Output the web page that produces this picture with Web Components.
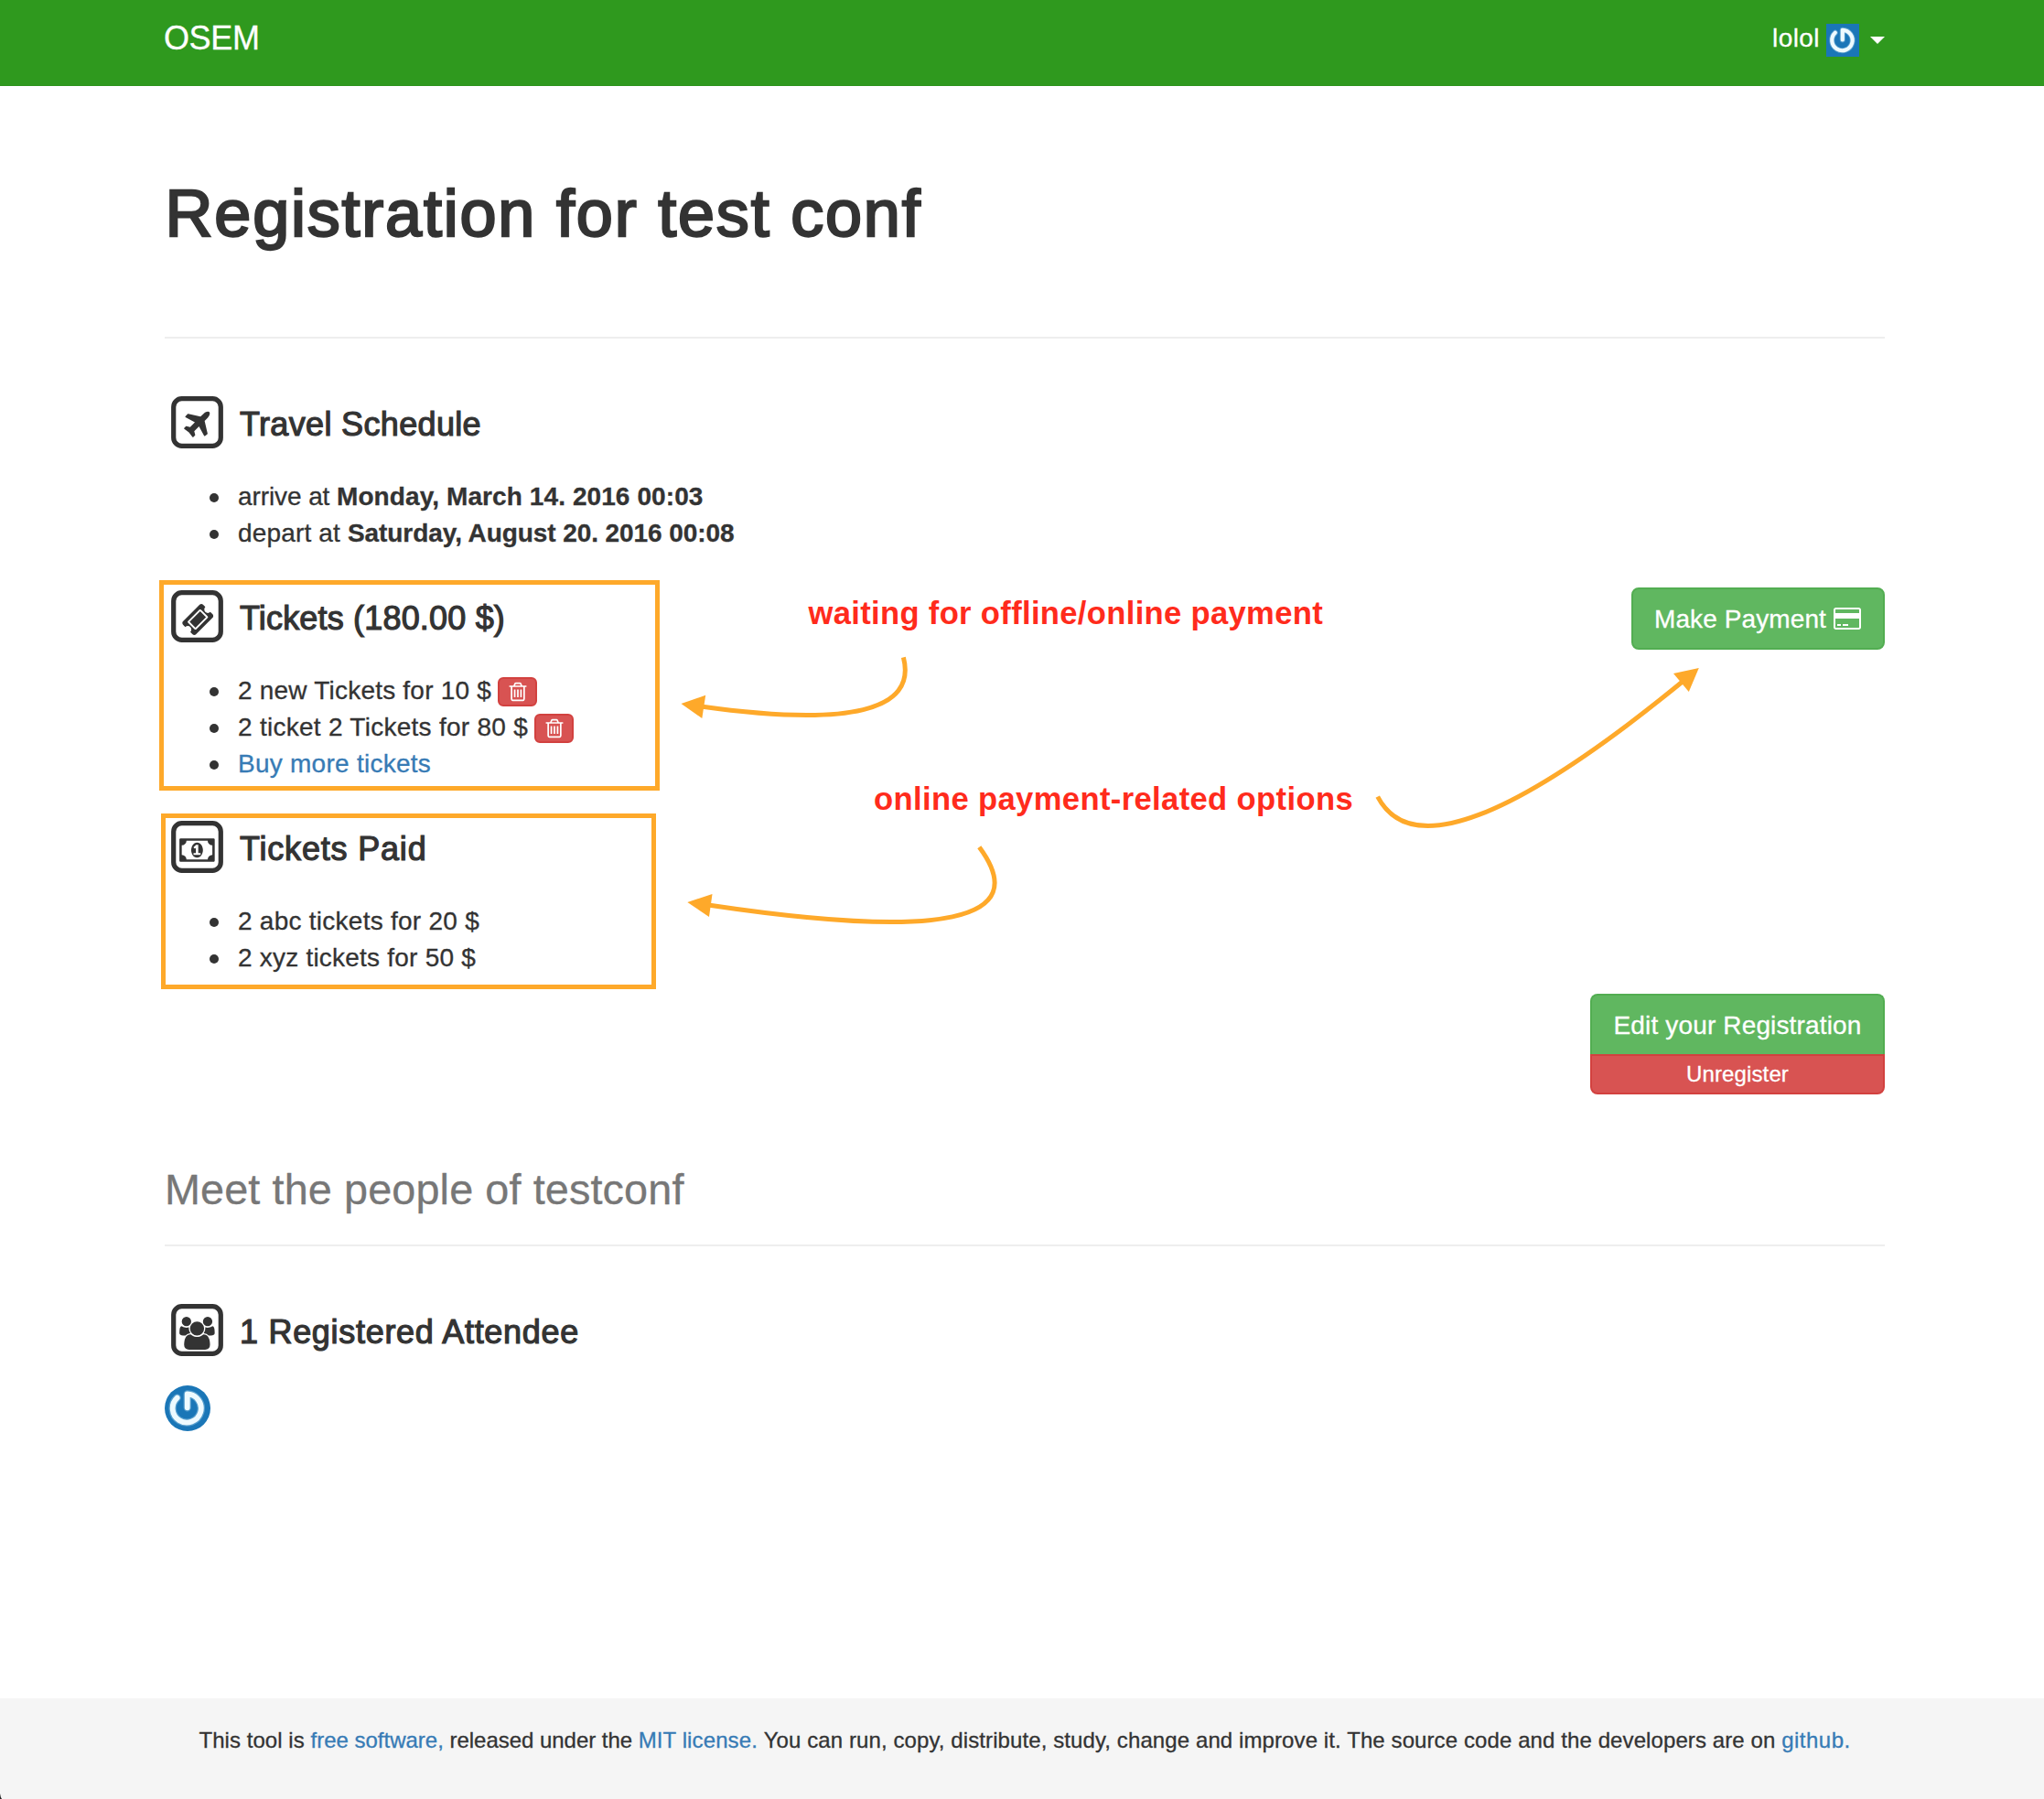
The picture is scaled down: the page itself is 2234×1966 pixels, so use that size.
<!DOCTYPE html>
<html lang="en">
<head>
<meta charset="utf-8">
<title>OSEM</title>
<style>
  html, body { margin: 0; padding: 0; background: #fff; }
  body { font: 28px/40px "Liberation Sans", Arial, sans-serif; color: #333; width: 2234px; height: 1966px; overflow: hidden; position: relative; -webkit-text-stroke-width: .3px; }
</style>
</head>
<body>
<osem-page>
  <osem-navbar slot="nav" brand="OSEM" user="lolol"></osem-navbar>
  <page-title><fit-text w="827">Registration for test conf</fit-text></page-title>

  <info-section icon="plane">
    <fit-text slot="title" w="264">Travel Schedule</fit-text>
    <list-row><fit-text w="108">arrive at </fit-text><b><fit-text w="400.5">Monday, March 14. 2016 00:03</fit-text></b></list-row>
    <list-row><fit-text w="120">depart at </fit-text><b><fit-text w="422.5">Saturday, August 20. 2016 00:08</fit-text></b></list-row>
  </info-section>

  <info-section icon="ticket">
    <fit-text slot="title" w="290">Tickets (180.00 $)</fit-text>
    <list-row><fit-text w="277">2 new Tickets for 10 $</fit-text><trash-button></trash-button></list-row>
    <list-row><fit-text w="317">2 ticket 2 Tickets for 80 $</fit-text><trash-button></trash-button></list-row>
    <list-row><text-link><fit-text w="211">Buy more tickets</fit-text></text-link></list-row>
    <pay-button slot="action"><fit-text w="188">Make Payment</fit-text></pay-button>
  </info-section>

  <info-section icon="money">
    <fit-text slot="title" w="204.5">Tickets Paid</fit-text>
    <list-row><fit-text w="264">2 abc tickets for 20 $</fit-text></list-row>
    <list-row><fit-text w="260">2 xyz tickets for 50 $</fit-text></list-row>
  </info-section>

  <registration-actions>
    <fit-text slot="edit" w="271">Edit your Registration</fit-text>
    <fit-text slot="remove" w="112">Unregister</fit-text>
  </registration-actions>

  <people-heading><fit-text w="567.5">Meet the people of testconf</fit-text></people-heading>

  <info-section icon="users">
    <fit-text slot="title" w="371">1 Registered Attendee</fit-text>
    <user-avatar round></user-avatar>
  </info-section>

  <osem-footer slot="footer">
    <fit-text w="122">This tool is </fit-text><text-link><fit-text w="152">free software, </fit-text></text-link><fit-text w="206.2">released under the </fit-text><text-link><fit-text w="137">MIT license. </fit-text></text-link><fit-text w="1112.5">You can run, copy, distribute, study, change and improve it. The source code and the developers are on </fit-text><text-link><fit-text w="75.5">github.</fit-text></text-link>
  </osem-footer>
</osem-page>

<annotation-layer>
  <annotation-note style="left:883.5px;top:650px"><fit-text w="562.5">waiting for offline/online payment</fit-text></annotation-note>
  <annotation-note style="left:955px;top:853px"><fit-text w="524">online payment-related options</fit-text></annotation-note>
</annotation-layer>

<script>
const define = (name, html, setup) => {
  const template = document.createElement('template');
  template.innerHTML = html;
  customElements.define(name, class extends HTMLElement {
    connectedCallback() {
      if (this.shadowRoot) return;
      this.attachShadow({ mode: 'open' }).appendChild(template.content.cloneNode(true));
      if (setup) setup(this, this.shadowRoot);
    }
  });
};

/* Font Awesome glyph outlines, 1792 units to the em */
const ICONS = {
  plane: [10.3, 'M1568 160q44 52 12 148t-108 172l-161 161 160 696q5 19-12 33l-128 96q-7 6-19 6-4 0-7-1-15-3-21-16l-279-508-259 259 53 194q5 17-8 31l-96 96q-9 9-23 9h-2q-15-2-24-13l-189-252-252-189q-11-7-13-23-1-13 9-25l96-97q9-9 23-9 6 0 8 1l194 53 259-259-508-279q-14-8-17-24-2-16 9-27l128-128q14-13 30-8l665 159 160-160q76-76 172-108t148 12z'],
  ticket: [11.2, 'M1024 452l316 316-572 572-316-316zm-211 979l618-618q19-19 19-45t-19-45l-362-362q-18-18-45-18t-45 18l-618 618q-19 19-19 45t19 45l362 362q18 18 45 18t45-18zm889-637l-907 908q-37 37-90.5 37t-90.5-37l-126-126q56-56 56-136t-56-136-136-56-136 56l-125-126q-37-37-37-90.5t37-90.5l907-906q37-37 90.5-37t90.5 37l125 125q-56 56-56 136t56 136 136 56 136-56l126 125q37 37 37 90.5t-37 90.5z'],
  money: [9.1, 'M768 1152h384v-96h-128v-448h-114l-148 137 77 80q42-37 55-57h2v288h-128v96zm512-256q0 70-21 142t-59.5 134-101.5 101-138 39-138-39-101.5-101-59.5-134-21-142 21-142 59.5-134 101.5-101 138-39 138 39 101.5 101 59.5 134 21 142zm512 256v-512q-106 0-181-75t-75-181h-1152q0 106-75 181t-181 75v512q106 0 181 75t75 181h1152q0-106 75-181t181-75zm128-832v1152q0 26-19 45t-45 19h-1792q-26 0-45-19t-19-45v-1152q0-26 19-45t45-19h1792q26 0 45 19t19 45z'],
  users: [9.1, 'M593 896q-162 5-265 128h-134q-82 0-138-40.5t-56-118.5q0-353 124-353 6 0 43.5 21t97.5 42.5 119 21.5q67 0 133-23-5 37-5 66 0 139 81 256zm1071 637q0 120-73 189.5t-194 69.5h-874q-121 0-194-69.5t-73-189.5q0-53 3.5-103.5t14-109 26.5-108.5 43-97.5 62-81 85.5-53.5 111.5-20q10 0 43 21.5t73 48 107 48 135 21.5 135-21.5 107-48 73-48 43-21.5q61 0 111.5 20t85.5 53.5 62 81 43 97.5 26.5 108.5 14 109 3.5 103.5zm-1024-1277q0 106-75 181t-181 75-181-75-75-181 75-181 181-75 181 75 75 181zm704 384q0 159-112.5 271.5t-271.5 112.5-271.5-112.5-112.5-271.5 112.5-271.5 271.5-112.5 271.5 112.5 112.5 271.5zm576 225q0 78-56 118.5t-138 40.5h-134q-103-123-265-128 81-117 81-256 0-29-5-66 66 23 133 23 59 0 119-21.5t97.5-42.5 43.5-21q124 0 124 353zm-128-609q0 106-75 181t-181 75-181-75-75-181 75-181 181-75 181 75 75 181z']
};

define('osem-page', `
  <style>
    :host { display: flex; flex-direction: column; height: 1966px; }
    main { flex: 1; width: 1880px; margin-left: 180px; display: flex; flex-direction: column; }
  </style>
  <slot name="nav"></slot><main><slot></slot></main><slot name="footer"></slot>`);

define('osem-navbar', `
  <style>
    :host { display: flex; justify-content: space-between; align-items: flex-start; box-sizing: border-box; height: 94px; padding: 0 174px 0 179px; background: #2f991e; border-bottom: 1px solid #2c931b; color: #fff; }
    .brand { font-size: 36px; line-height: 40px; padding-top: 22px; }
    .user { display: flex; align-items: flex-start; }
    .name { padding-top: 22px; line-height: 40px; }
    user-avatar { margin: 26px 12px 0 7px; }
    i { border: 8px solid transparent; border-top-color: #fff; border-bottom: 0; margin-top: 40px; }
  </style>
  <span class="brand"><fit-text w="104.5"></fit-text></span>
  <span class="user"><span class="name"><fit-text w="52"></fit-text></span><user-avatar></user-avatar><i></i></span>`,
  (host, root) => {
    root.querySelector('.brand fit-text').textContent = host.getAttribute('brand');
    root.querySelector('.name fit-text').textContent = host.getAttribute('user');
  });

define('user-avatar', `
  <style>
    :host { display: block; width: 36px; height: 36px; flex: none; }
    :host([round]) { width: 50px; height: 50px; border-radius: 50%; overflow: hidden; }
    svg { display: block; width: 100%; height: 100%; }
  </style>
  <svg viewBox="0 0 36 36" fill="none" stroke-linecap="round" stroke-linejoin="round">
    <rect width="36" height="36" fill="#1a76b7"/>
    <path d="M17.8 17.5V6.8A11.2 11.2 0 1 1 9.8 9.8" stroke="#8fc3e3" stroke-opacity=".5" stroke-width="6"/>
    <path d="M17.8 17.5V6.8A11.2 11.2 0 1 1 9.8 9.8" stroke="#eefaff" stroke-width="4.2"/>
  </svg>`);

define('page-title', `
  <style>
    :host { display: block; height: 175px; padding-top: 99px; margin-bottom: 63px; border-bottom: 2px solid #eee; font-size: 72px; line-height: 80px; -webkit-text-stroke-width: 2.4px; }
    div { margin-left: .5px; }
  </style><div><slot></slot></div>`);

define('stack-icon', `
  <style>:host { display: block; width: 57px; height: 57px; flex: none; } svg { display: block; }</style>
  <svg width="57" height="57" viewBox="0 0 57 57">
    <rect x="2.7" y="2.7" width="51.6" height="51.6" rx="9" fill="none" stroke="#333" stroke-width="5.2"/>
    <path fill="#333"/>
  </svg>`,
  (host, root) => {
    const [x, d] = ICONS[host.getAttribute('name')];
    const path = root.querySelector('path');
    path.setAttribute('d', d);
    path.setAttribute('transform', `translate(${x} 14) scale(.02009)`);
  });

define('info-section', `
  <style>
    :host { display: flex; justify-content: space-between; align-items: flex-start; margin-bottom: 43px; }
    :host([icon=money]) { margin-bottom: 20px; }
    header { display: flex; height: 57px; padding-left: 7px; gap: 18px; margin-bottom: 32px; font-size: 36px; line-height: 61px; -webkit-text-stroke-width: 1.2px; }
    .action { margin-top: -3px; }
  </style>
  <div><header><slot name="title"></slot></header><slot></slot></div>
  <div class="action"><slot name="action"></slot></div>`,
  (host, root) => {
    const icon = document.createElement('stack-icon');
    icon.setAttribute('name', host.getAttribute('icon'));
    root.querySelector('header').prepend(icon);
  });

define('list-row', `
  <style>
    :host { display: flex; height: 40px; line-height: 42px; padding-left: 49px; align-items: flex-start; }
    i { width: 10px; height: 10px; margin: 17px 21px 0 0; border-radius: 50%; background: #333; flex: none; }
  </style><i></i><slot></slot>`);

define('text-link', `<style>:host { display: inline; color: #377bb5; }</style><slot></slot>`);

define('trash-button', `
  <style>
    :host { display: flex; align-items: center; justify-content: center; box-sizing: border-box; width: 43px; height: 32px; margin: 6px 0 0 7px; border: 2px solid #d2413f; border-radius: 6px; background: #d85352; }
    svg { display: block; margin-top: -1px; }
  </style>
  <svg width="24" height="24" viewBox="0 0 1792 1792" fill="#fff"><path d="M704 736v576q0 14-9 23t-23 9h-64q-14 0-23-9t-9-23v-576q0-14 9-23t23-9h64q14 0 23 9t9 23zm256 0v576q0 14-9 23t-23 9h-64q-14 0-23-9t-9-23v-576q0-14 9-23t23-9h64q14 0 23 9t9 23zm256 0v576q0 14-9 23t-23 9h-64q-14 0-23-9t-9-23v-576q0-14 9-23t23-9h64q14 0 23 9t9 23zm128 724v-948h-896v948q0 22 7 40.5t14.5 27 10.5 8.5h832q3 0 10.5-8.5t14.5-27 7-40.5zm-672-1076h448l-48-117q-7-9-17-11h-317q-10 2-17 11zm928 32v64q0 14-9 23t-23 9h-96v948q0 83-47 143.5t-113 60.5h-832q-66 0-113-58.5t-47-141.5v-952h-96q-14 0-23-9t-9-23v-64q0-14 9-23t23-9h309l70-167q15-37 54-63t79-26h320q40 0 79 26t54 63l70 167h309q14 0 23 9t9 23z"/></svg>`);

define('pay-button', `
  <style>
    :host { display: flex; box-sizing: border-box; width: 277px; height: 68px; padding: 12px 0 0 23px; line-height: 42px; border: 2px solid #52ad51; border-radius: 8px; background: #60b760; color: #fff; }
    svg { display: block; margin: 6px 0 0 7.5px; }
  </style>
  <slot></slot>
  <svg width="30" height="28" viewBox="0 0 1920 1792" fill="#fff"><path d="M1760 128q66 0 113 47t47 113v1216q0 66-47 113t-113 47h-1600q-66 0-113-47t-47-113v-1216q0-66 47-113t113-47h1600zm-1600 128q-13 0-22.5 9.5t-9.5 22.5v224h1664v-224q0-13-9.5-22.5t-22.5-9.5h-1600zm1600 1280q13 0 22.5-9.5t9.5-22.5v-608h-1664v608q0 13 9.5 22.5t22.5 9.5h1600zm-1504-128v-128h256v128h-256zm384 0v-128h384v128h-384z"/></svg>`);

define('registration-actions', `
  <style>
    :host { display: flex; flex-direction: column; align-self: flex-end; width: 322px; color: #fff; }
    div { box-sizing: border-box; display: flex; justify-content: center; border: 2px solid; }
    .edit { height: 66px; padding-top: 13px; background: #60b760; border-color: #52ad51; border-bottom: 0; border-radius: 8px 8px 0 0; }
    .remove { height: 44px; padding-top: 0; font-size: 24px; background: #d85352; border-color: #d2413f; border-radius: 0 0 8px 8px; }
  </style>
  <div class="edit"><slot name="edit"></slot></div>
  <div class="remove"><slot name="remove"></slot></div>`);

define('people-heading', `
  <style>
    :host { display: block; height: 86px; margin: 78px 0 63px; border-bottom: 2px solid #eee; font-size: 46.8px; line-height: 52px; color: #777; }
  </style><slot></slot>`);

define('osem-footer', `
  <style>
    :host { display: block; box-sizing: border-box; height: 110px; padding: 26px 0 0 217.5px; background: #f5f5f5; font-size: 24px; line-height: 40px; white-space: nowrap; }
    div { display: flex; }
  </style><div><slot></slot></div>`);

define('annotation-layer', `
  <style>
    :host { display: block; position: absolute; inset: 0; pointer-events: none; }
    svg { display: block; }
  </style>
  <svg width="2234" height="1966" viewBox="0 0 2234 1966" fill="none" stroke="#fea92a" stroke-width="5">
    <rect x="176.5" y="636.5" width="542" height="225"/>
    <rect x="178.5" y="891.5" width="536" height="187"/>
    <path d="M987.4 718.3Q1010 806 766 772"/>
    <path d="M1070.3 925.7Q1159.7 1046.5 774 989"/>
    <path d="M1505.7 870.7Q1559.7 973.5 1840 744"/>
    <g fill="#fea92a" stroke="none">
      <path d="M744.5 769L771.2 759.7 767.3 785z"/>
      <path d="M751.3 986L778.5 977 775 1002z"/>
      <path d="M1856.8 730L1829 736 1845.8 756z"/>
      <path d="M0 1960Q.5 1964 2 1966H0z" fill="#222"/>
    </g>
  </svg>
  <slot></slot>`);

define('annotation-note', `
  <style>:host { display: block; position: absolute; font-weight: bold; font-size: 34.6px; line-height: 40px; color: #ff2b1c; -webkit-text-stroke-width: 0; }</style><slot></slot>`);

/* Tracks its text so that the run takes the advance given by the w attribute */
define('fit-text', `<style>:host { display: inline-block; white-space: pre; }</style><slot></slot>`,
  host => {
    const target = parseFloat(host.getAttribute('w'));
    const natural = host.getBoundingClientRect().width;
    host.style.letterSpacing = ((target - natural) / host.textContent.length).toFixed(4) + 'px';
  });
</script>
</body>
</html>
